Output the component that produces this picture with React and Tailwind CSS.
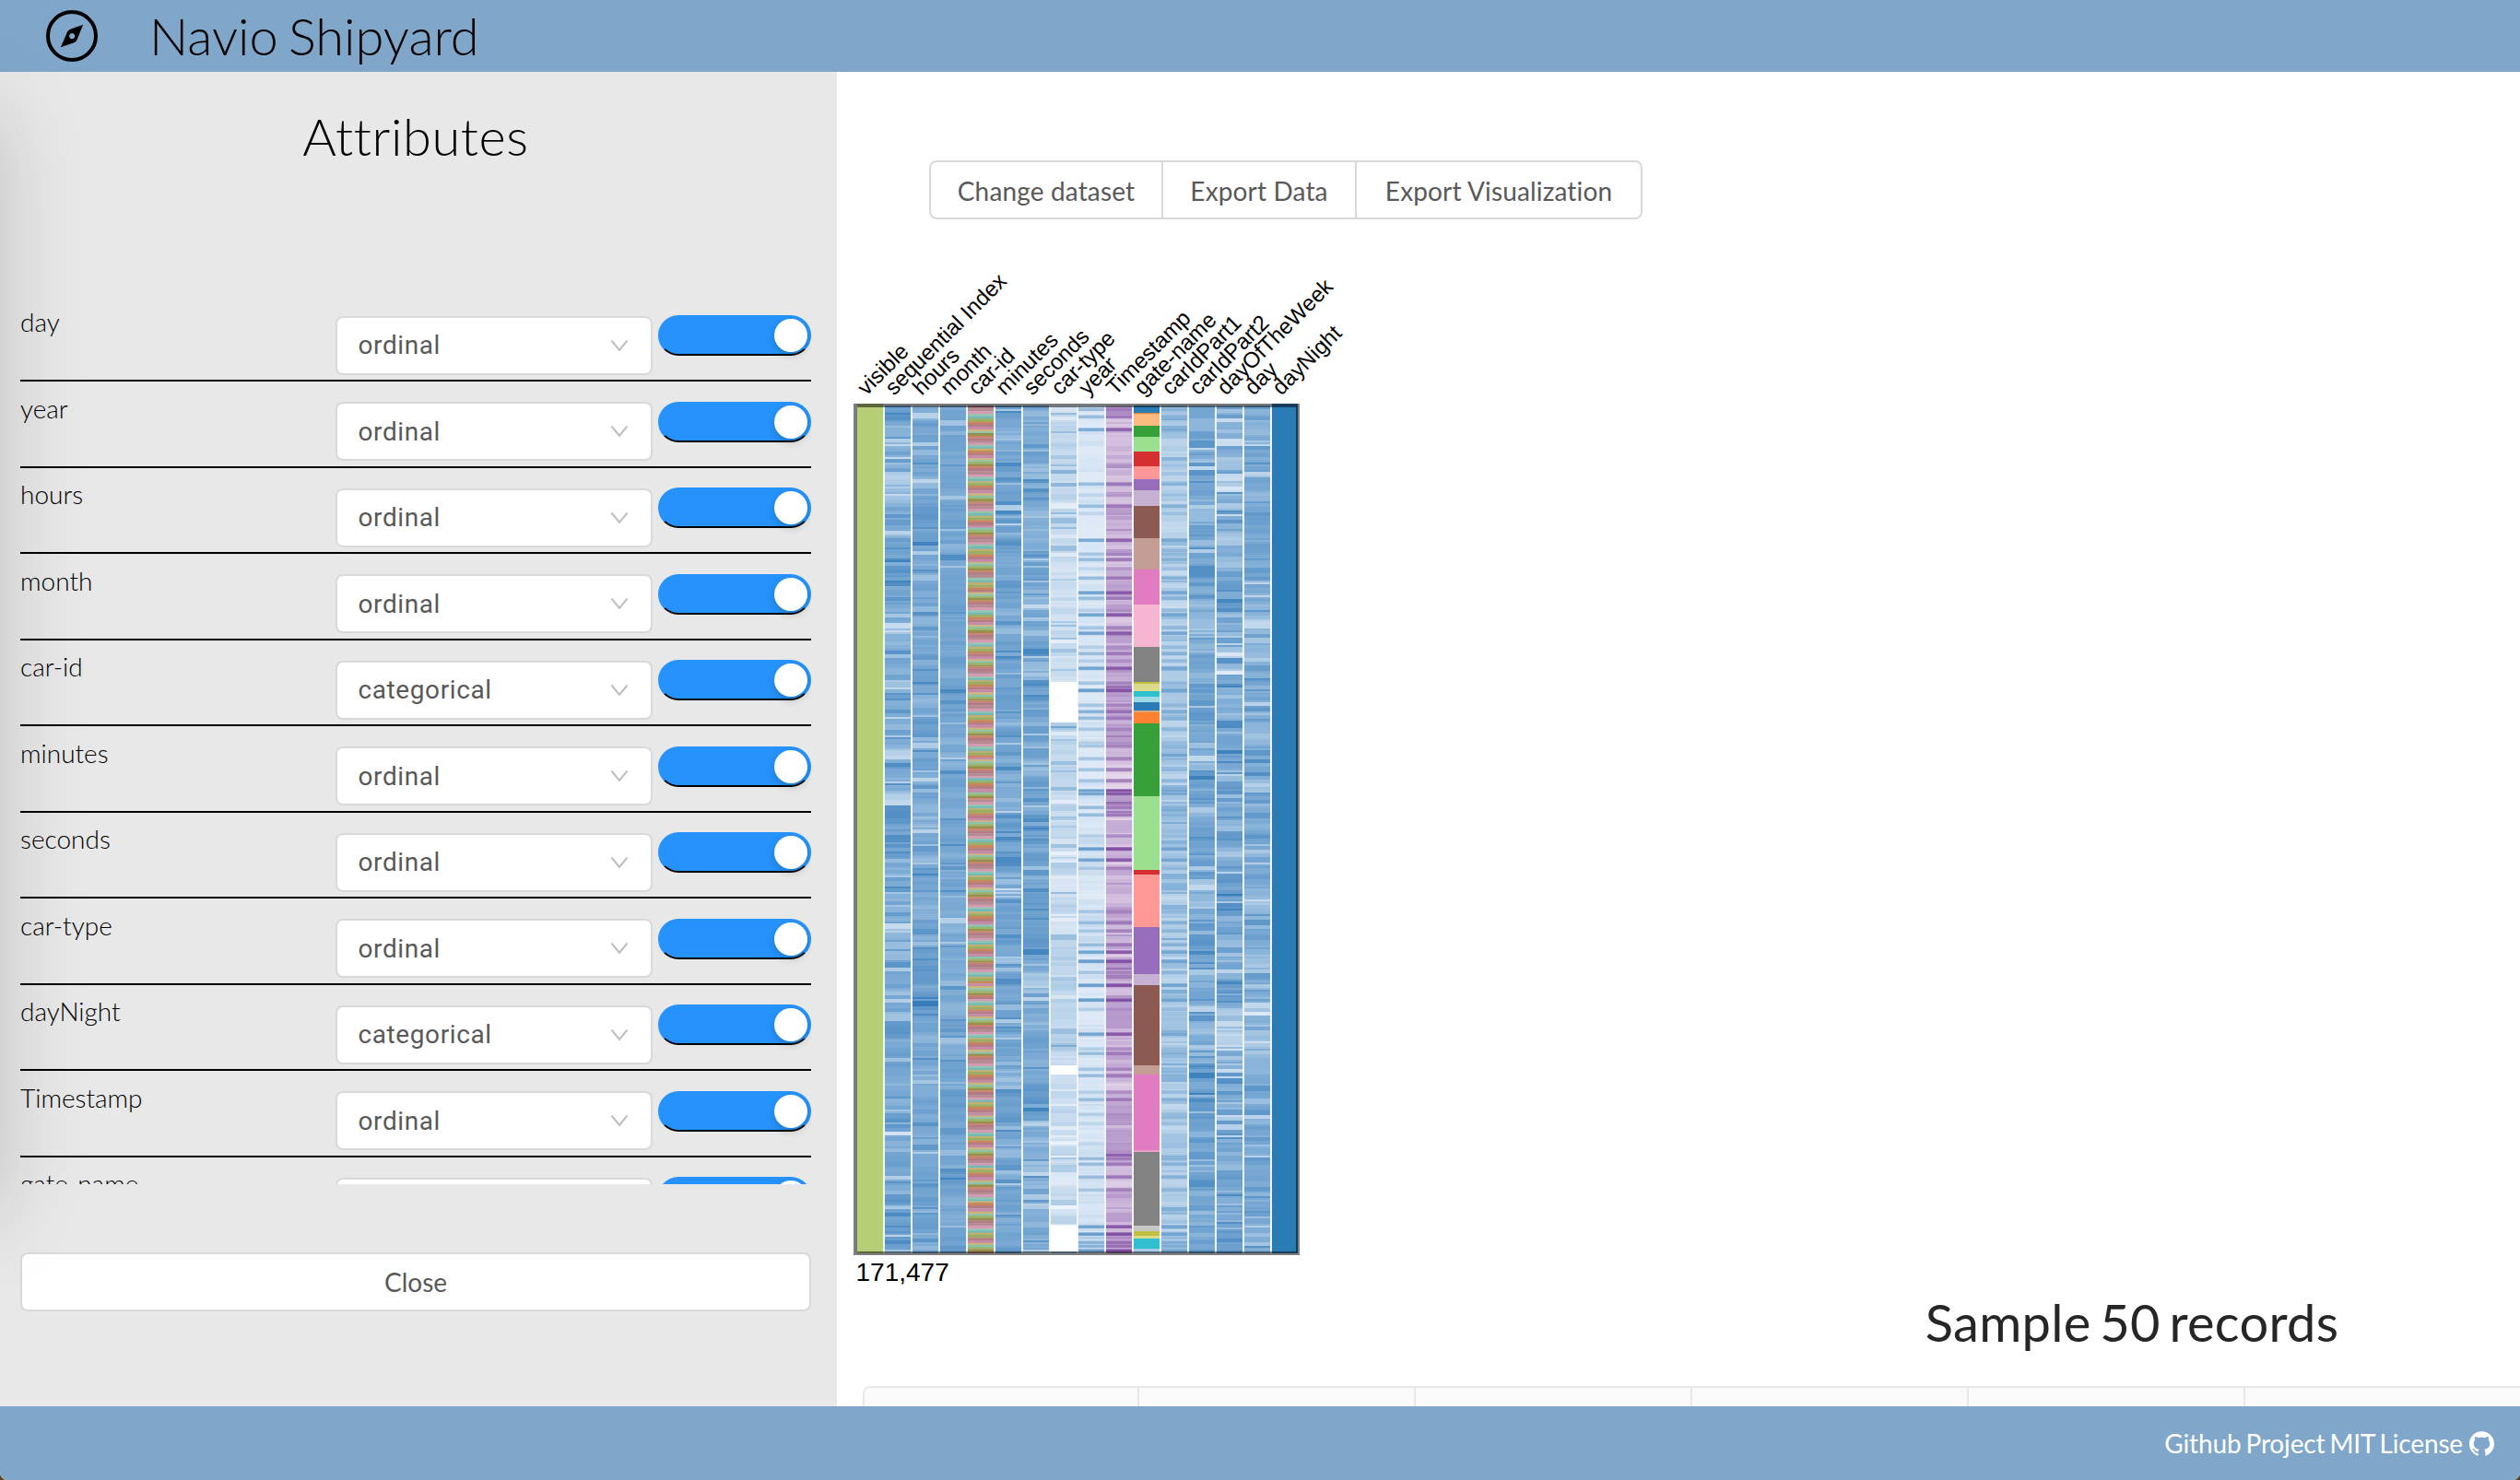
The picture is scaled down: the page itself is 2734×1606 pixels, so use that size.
import React from "react";
import { AiFillGithub } from "react-icons/ai";

const ATTRIBUTES = [
  ["day", "ordinal"],
  ["year", "ordinal"],
  ["hours", "ordinal"],
  ["month", "ordinal"],
  ["car-id", "categorical"],
  ["minutes", "ordinal"],
  ["seconds", "ordinal"],
  ["car-type", "ordinal"],
  ["dayNight", "categorical"],
  ["Timestamp", "ordinal"],
  ["gate-name", "categorical"],
];

const COLUMNS = [
  "visible", "sequential Index", "hours", "month", "car-id", "minutes", "seconds", "car-type",
  "year", "Timestamp", "gate-name", "carIdPart1", "carIdPart2", "dayOfTheWeek", "day", "dayNight",
];

const TOP = 440;
const BOTTOM = 1360;

/* [start y, colour] of every gate-name segment */
const GATES = [
  [440, "#2b7bb4"], [448, "#e38a3c"], [449.5, "#fdbb80"], [462, "#37a038"], [474, "#9be08f"],
  [490, "#d62f32"], [506, "#ff9896"], [520, "#966cbb"], [532, "#c6b1d5"], [549, "#8c5a50"],
  [584, "#c49d94"], [618, "#e07cbf"], [656, "#f6b6d2"], [702, "#828282"], [740, "#c0c040"],
  [742, "#dbda8c"], [750, "#2fc0cf"], [756, "#9edae5"], [762, "#2b7bb4"], [771, "#d9a77c"],
  [773, "#ff8230"], [785, "#37a038"], [864, "#9be08f"], [944, "#d62f32"], [949, "#ff9996"],
  [1006, "#966cbb"], [1057, "#c6b1d5"], [1069, "#8c5a50"], [1156, "#c49d94"], [1166, "#e07cbf"],
  [1248.5, "#f0a0cc"], [1250, "#828282"], [1330, "#c7c7c7"], [1336, "#c0c040"], [1341, "#dbda8c"],
  [1344, "#2fc0cf"], [1355, "#a5cbe6"],
];

/* [centre y, strength] of the rows that stand out in year, Timestamp and carIdPart1 */
const PEAKS = [
  [444, 0.6], [452, 0.6], [466, 0.8], [525, 0.6], [537, 0.3], [549, 0.6], [557, 0.3], [586, 0.8],
  [601, 0.5], [607, 0.6], [617, 0.3], [627, 0.6], [643, 0.9], [649, 0.6], [662, 0.4], [667, 0.9],
  [681, 0.5], [687, 0.9], [702, 0.4], [709, 0.6], [717, 0.4], [725, 0.9], [741, 0.5], [749, 1],
  [765, 0.5], [772, 0.7], [779, 0.6], [791, 0.5], [806, 0.4], [809, 0.5], [823, 0.5], [835, 0.5],
  [847, 0.5], [858, 1], [861, 0.9], [876, 0.6], [884, 0.6], [907, 0.4], [921, 1], [933, 0.9],
  [942, 0.5], [989, 0.5], [1001, 0.6], [1010, 0.5], [1025, 0.6], [1033, 0.9], [1043, 1], [1055, 0.5],
  [1069, 1], [1085, 1], [1095, 0.4], [1122, 0.9], [1138, 0.4], [1143, 0.6], [1160, 0.5], [1167, 0.6],
  [1185, 0.4], [1193, 0.6], [1209, 0.4], [1219, 0.3], [1241, 0.3], [1257, 0.6], [1263, 0.6],
  [1277, 0.6], [1291, 0.5], [1331, 0.9], [1339, 1], [1343, 0.4], [1348, 0.7], [1352, 0.7], [1357, 1],
];

const BLUES = [[240, 246, 252], [222, 233, 246], [184, 210, 233], [126, 172, 213], [92, 149, 200], [54, 125, 186]];
const PURPLES = [[242, 232, 243], [221, 204, 228], [195, 172, 213], [164, 128, 188], [134, 86, 168], [108, 52, 150]];

function random(seed) {
  let s = seed * 7919 + 13;
  return () => {
    s = (s * 1664525 + 1013904223) % 4294967296;
    return s / 4294967296;
  };
}

function tone(scale, v) {
  const p = Math.max(0, Math.min(0.999, v)) * (scale.length - 1);
  const i = Math.floor(p);
  const t = p - i;
  return "rgb(" + scale[i].map((c, k) => Math.round(c + (scale[i + 1][k] - c) * t)).join(",") + ")";
}

/* Density rows: a slow drift with short darker and lighter runs on top of it. */
function stripes(seed, mean, spread, jump, scale, peaks) {
  const r = random(seed);
  const rows = [];
  let y = TOP;
  let level = mean;
  while (y < BOTTOM) {
    const h = r() < 0.55 ? 2 : r() < 0.7 ? 4 : 6;
    level += (mean - level) * 0.3 + (r() - 0.5) * spread;
    let v = level;
    const k = r();
    if (k < jump) v += 0.1 + r() * 0.1;
    else if (k < jump * 1.8) v -= 0.08 + r() * 0.13;
    if (peaks) {
      v = level * (k < 0.25 ? 1.25 : 1);
    }
    rows.push({ y, h, fill: tone(scale, v) });
    y += h;
  }
  if (peaks) {
    PEAKS.forEach(([c, s]) => {
      rows.push({ y: c - 2, h: 4, fill: tone(scale, mean + s * peaks * 0.6) });
      rows.push({ y: c - 1, h: 2.5, fill: tone(scale, mean + s * peaks) });
    });
  }
  return rows;
}

function carIds() {
  const r = random(5);
  const bands = [
    ["#b27b88", 3], ["#b58b92", 3], ["#d699b4", 2.5], ["#93c4ad", 2], ["#72b9b8", 2.5], ["#c4ae6f", 2], ["#98ae62", 3],
    ["#c9855c", 2.5], ["#b57c82", 3], ["#c48ba9", 3], ["#cdb578", 2], ["#88c3af", 2], ["#9bb56f", 2.5], ["#96904f", 2.5],
    ["#cb8468", 2],
  ];
  const rows = [];
  let y = TOP;
  let i = 0;
  while (y < BOTTOM) {
    const [fill, base] = bands[i % bands.length];
    const h = Math.max(1, base + (r() - 0.5));
    rows.push({ y, h, fill });
    y += h;
    i += r() < 0.08 ? 2 : 1;
  }
  return rows;
}

const solid = (fill) => [{ y: TOP - 2, h: BOTTOM - TOP + 2, fill }];

const DATA = [
  solid("#b6ce75"),
  stripes(1, 0.63, 0.2, 0.22, BLUES),
  stripes(2, 0.66, 0.15, 0.12, BLUES),
  stripes(3, 0.66, 0.12, 0.09, BLUES),
  carIds(),
  stripes(6, 0.64, 0.19, 0.16, BLUES),
  stripes(7, 0.63, 0.19, 0.16, BLUES),
  stripes(8, 0.34, 0.13, 0.13, BLUES),
  stripes(9, 0.22, 0.06, 0.1, BLUES, 0.5),
  stripes(10, 0.35, 0.26, 0.2, PURPLES, 0.48),
  GATES.map(([y, fill], i) => ({ y, fill, h: (GATES[i + 1] ? GATES[i + 1][0] : BOTTOM) - y })),
  stripes(12, 0.42, 0.12, 0.1, BLUES, 0.26),
  stripes(13, 0.63, 0.19, 0.18, BLUES),
  stripes(14, 0.6, 0.25, 0.25, BLUES),
  stripes(15, 0.6, 0.17, 0.2, BLUES),
  solid("#2b7bb4"),
];

const MISSING = [[740, 784], [1156, 1166], [1329.5, 1358]];

function Heatmap() {
  return (
    <svg className="ml-[12px] block" width="620" height="1130" viewBox="920 280 620 1130">
      <g fontFamily="'Liberation Sans', Arial, sans-serif" fontSize="24" fill="#000" wordSpacing="0">
        {COLUMNS.map((name, i) => (
          <text key={name} transform={`translate(${940 + i * 30} 430) rotate(-45)`}>{name}</text>
        ))}
      </g>
      {DATA.map((rows, c) => (
        <g key={c}>
          <rect x={928 + c * 30} y={438} width="30" height="922" fill="#eef4fa" />
          {rows.map((d, i) => (
            <rect key={i} x={930 + c * 30} y={d.y} width="28" height={Math.min(d.h + 0.3, BOTTOM - d.y)} fill={d.fill} />
          ))}
        </g>
      ))}
      {MISSING.map(([a, b]) => (
        <rect key={a} x="1139" y={a} width="30" height={b - a} fill="#fff" />
      ))}
      <rect x="928" y="440" width="480" height="920" fill="none" stroke="#000" strokeOpacity="0.5" strokeWidth="4" />
      <text x="928.5" y="1390" fontFamily="'Liberation Sans', Arial, sans-serif" fontSize="28" fill="#000">171,477</text>
    </svg>
  );
}

function CompassIcon() {
  return (
    <svg className="ml-[50px] block h-14 w-14" viewBox="50 11 56 56">
      <circle cx="78" cy="39" r="26" fill="none" stroke="#000" strokeWidth="4" />
      <path
        fillRule="evenodd"
        d="M90.2 26.8 77.6 31.2Q73.4 32.4 72.2 36.8L65.8 51.2 79.8 46.4Q83 45.4 83.8 42.4ZM78.2 36a3.1 3.1 0 1 0 .01 0Z"
      />
    </svg>
  );
}

function AttributeRow({ name, type }) {
  return (
    <div className="flex h-[93.5px] items-start border-b-2 border-black">
      <div className="w-[342px] pt-[7.5px] text-[28px] leading-[42px] font-light text-black">{name}</div>
      <div className="mt-[22px] flex h-16 w-[344px] items-center justify-between rounded-[8px] border-2 border-[#d9d9d9] bg-white pr-[24px] pl-[22.5px] font-[Roboto,sans-serif] text-[28px] tracking-[0.6px] text-[#595959]">
        <span className="pt-px">{type}</span>
        <svg className="block" width="20" height="14" viewBox="0 0 20 14">
          <path d="M1.5 1.5 10 12 18.5 1.5" fill="none" stroke="#bfbfbf" strokeWidth="2" />
        </svg>
      </div>
      <div className="mt-[21.5px] ml-[6px] flex h-11 w-[166px] justify-end rounded-full border-2 border-transparent border-b-black bg-[#2692fc] bg-origin-border pt-[2px] pr-[2px]">
        <div className="h-9 w-9 rounded-full bg-white shadow-[0_4px_8px_rgba(0,35,11,0.2)]" />
      </div>
    </div>
  );
}

export default function App() {
  return (
    <div className="bg-[#5f4218]">
      <div className="relative flex h-[1606px] w-[2734px] flex-col overflow-hidden rounded-b-[8px] bg-white font-[Lato,sans-serif] [font-variant-ligatures:none]">
        <header className="flex h-[78px] shrink-0 items-center bg-[#80a7c9]">
          <CompassIcon />
          <h1 className="ml-[56px] text-[56px] leading-[76px] font-light text-black [word-spacing:-4px]">Navio Shipyard</h1>
        </header>

        <div className="flex min-h-0 flex-1">
          <aside className="w-[908px] shrink-0 bg-[#e8e8e8] pr-[28px] pl-[22px]">
            <h2 className="mt-[28px] text-center text-[56px] leading-[84px] font-light tracking-[0.6px] text-black">
              Attributes
            </h2>
            <div className="mt-[130.5px] h-[964.5px] overflow-hidden">
              {ATTRIBUTES.map(([name, type]) => (
                <AttributeRow key={name} name={name} type={type} />
              ))}
            </div>
            <button className="mt-[74px] block h-16 w-full rounded-[8px] border-2 border-[#d9d9d9] bg-white text-[28px] text-[#595959]">
              Close
            </button>
          </aside>

          <main className="min-w-0 flex-1 overflow-hidden">
            <div className="mt-[96px] ml-[100px] flex h-16 w-fit divide-x-2 divide-[#d9d9d9] rounded-[8px] border-2 border-[#d9d9d9] text-[28px] tracking-[0.15px] text-[#595959] [word-spacing:-2px]">
              <button className="w-[252px] pt-px">Change dataset</button>
              <button className="w-[210px] pt-px">Export Data</button>
              <button className="w-[308px] pt-px">Export Visualization</button>
            </div>
            <div className="mt-[42px]">
              <Heatmap />
            </div>
            <div className="ml-[28px] w-[2754px]">
              <h2 className="-mt-[15px] text-center text-[56px] leading-[80px] tracking-[0.3px] text-[#262626] [word-spacing:-5px]">
                Sample 50 records
              </h2>
              <div className="mt-[29px] flex h-[110px] overflow-hidden rounded-t-[8px] border-2 border-[#e8e8e8] bg-[#fafafa]">
                <div className="w-[298px] shrink-0 border-r-2 border-[#e8e8e8]" />
                {Array.from({ length: 8 }, (_, i) => (
                  <div key={i} className="w-[300px] shrink-0 border-r-2 border-[#e8e8e8]" />
                ))}
              </div>
            </div>
          </main>
        </div>

        <footer className="z-10 flex h-20 shrink-0 items-center justify-end bg-[#80a7c9] pr-[26px] text-[28px] text-white">
          <span className="-mt-px tracking-[-0.15px] [word-spacing:-2px]">Github Project MIT License</span>
          <AiFillGithub className="ml-[5px]" size={31} />
        </footer>

        <div className="pointer-events-none absolute top-[120px] -left-[400px] h-[1200px] w-[400px] shadow-[0_0_90px_rgba(0,0,0,0.17)]" />
      </div>
    </div>
  );
}
